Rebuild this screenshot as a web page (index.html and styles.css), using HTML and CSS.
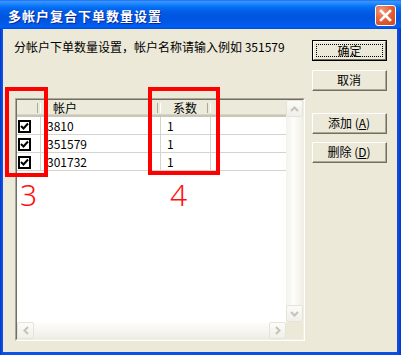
FILE: index.html
```html
<!DOCTYPE html>
<html>
<head>
<meta charset="utf-8">
<link rel="stylesheet" href="styles.css">
</head>
<body>
<div class="win">
  <div class="titlebar">
    <span class="title">多帐户复合下单数量设置</span>
    <div class="close">
      <svg width="19" height="19" viewBox="0 0 19 19"><path d="M5 5 L14 14 M14 5 L5 14" stroke="#fff" stroke-width="2.6" stroke-linecap="square"/></svg>
    </div>
  </div>
  <div class="client">
    <div class="left">
      <div class="label">分帐户下单数量设置，帐户名称请输入例如 351579</div>
      <div class="list">
        <div class="list-in">
          <div class="view">
            <div class="hdr">
              <div class="hc c1"></div>
              <div class="hc c2 hl">帐户</div>
              <div class="hc c3 hm">系数</div>
              <div class="hc c4"></div>
            </div>
            <div class="row">
              <div class="cell c1"><span class="chk"><svg width="9" height="9" viewBox="0 0 9 9"><path d="M1 4 L3.5 6.5 L8 1.5" stroke="#000" stroke-width="2" fill="none"/></svg></span></div>
              <div class="cell c2 txt">3810</div>
              <div class="cell c3 txt">1</div>
              <div class="cell c4"></div>
            </div>
            <div class="row">
              <div class="cell c1"><span class="chk"><svg width="9" height="9" viewBox="0 0 9 9"><path d="M1 4 L3.5 6.5 L8 1.5" stroke="#000" stroke-width="2" fill="none"/></svg></span></div>
              <div class="cell c2 txt">351579</div>
              <div class="cell c3 txt">1</div>
              <div class="cell c4"></div>
            </div>
            <div class="row">
              <div class="cell c1"><span class="chk"><svg width="9" height="9" viewBox="0 0 9 9"><path d="M1 4 L3.5 6.5 L8 1.5" stroke="#000" stroke-width="2" fill="none"/></svg></span></div>
              <div class="cell c2 txt">301732</div>
              <div class="cell c3 txt">1</div>
              <div class="cell c4"></div>
            </div>
          </div>
          <div class="vscroll">
            <div class="arr"><svg width="9" height="6" viewBox="0 0 9 6"><path d="M1 5 L4.5 1.5 L8 5" stroke="#C6C4B8" stroke-width="2" fill="none"/></svg></div>
            <div class="vtrack"></div>
            <div class="arr"><svg width="9" height="6" viewBox="0 0 9 6"><path d="M1 1 L4.5 4.5 L8 1" stroke="#C6C4B8" stroke-width="2" fill="none"/></svg></div>
          </div>
          <div class="hscroll">
            <div class="arr"><svg width="6" height="9" viewBox="0 0 6 9"><path d="M5 1 L1.5 4.5 L5 8" stroke="#C6C4B8" stroke-width="2" fill="none"/></svg></div>
            <div class="htrack"></div>
            <div class="arr"><svg width="6" height="9" viewBox="0 0 6 9"><path d="M1 1 L4.5 4.5 L1 8" stroke="#C6C4B8" stroke-width="2" fill="none"/></svg></div>
          </div>
          <div class="corner"></div>
        </div>
      </div>
    </div>
    <div class="right">
      <div class="btn default"><div class="btn-in"><span class="focus">确定</span></div></div>
      <div class="btn b2"><div class="btn-in">取消</div></div>
      <div class="btn b3"><div class="btn-in">添加 (<u>A</u>)</div></div>
      <div class="btn b4"><div class="btn-in">删除 (<u>D</u>)</div></div>
    </div>
  </div>
  <div class="mark m3"></div>
  <div class="mark m4"></div>
  <span class="num n3">3</span>
  <span class="num n4">4</span>
</div>
</body>
</html>
```
FILE: styles.css
```css
* { box-sizing: border-box; }
body { margin: 0; font-family: "Noto Sans CJK SC", sans-serif; font-size: 12px; color: #000; }
.win {
  position: relative; width: 401px; height: 355px;
  display: flex; flex-direction: column;
  background: linear-gradient(to right, #0733C8 0, #0A52E8 2px, #0A4FE0 398px, #0733C8 401px);
  padding-bottom: 3px;
}
.titlebar {
  height: 29px; flex: none; display: flex; align-items: center;
  padding: 0 5px 0 8px;
  background: linear-gradient(to bottom, #0A5FE8 0, #3D95FF 1px, #2A8CFF 3px, #157EFD 5px, #0570F5 7px, #0262EA 10px, #0059E3 14px, #0055E0 18px, #0057E6 22px, #005CEE 25px, #0060F3 27px, #0049D6 29px);
}
.title {
  flex: 1; color: #fff; font-weight: bold; font-size: 13px; letter-spacing: 1px;
  text-shadow: 1px 1px #0B2A9A; padding-top: 1px;
}
.close {
  width: 21px; height: 21px; margin-top: 2px; border: 1px solid #fff; border-radius: 3px;
  background: radial-gradient(circle at 30% 25%, #F29A7D 0, #E5623A 45%, #CE4419 100%);
  display: flex; align-items: center; justify-content: center;
}
.client {
  flex: 1; margin: 0 4px 0 3px; background: #ECE9D8;
  display: flex; gap: 7px; padding: 11px 0 0 11px;
}
.left { width: 291px; flex: none; }
.label { line-height: 14px; white-space: nowrap; }
.list {
  margin: 44px 0 0 1px; width: 290px; height: 243px;
  border: 1px solid; border-color: #ACA899 #fff #fff #ACA899;
}
.list-in {
  height: 100%; border: 1px solid; border-color: #716F64 #F1EFE2 #F1EFE2 #716F64;
  background: #fff;
  display: grid; grid-template-columns: 1fr 17px; grid-template-rows: 1fr 17px;
}
.view { overflow: hidden; }
.hdr {
  display: flex; height: 17px; background: #EBEADB;
  border-bottom: 2px solid #C9C6B6; box-shadow: inset 0 -1px #D8D5C6;
}
.hc { position: relative; height: 15px; line-height: 15px; flex: none; }
.hc.c1::after, .hc.c2::after, .hc.c3::after {
  content: ""; position: absolute; right: 0; top: 3px; bottom: 2px; width: 2px;
  border-left: 1px solid #ACA899; border-right: 1px solid #fff;
}
.c1 { width: 24px; flex: none; }
.c2 { width: 120px; flex: none; }
.c3 { width: 50px; flex: none; }
.c4 { flex: 1; }
.hl { padding-left: 12px; }
.hm { text-align: center; padding-right: 2px; }
.row { display: flex; height: 18px; border-bottom: 1px solid #D5D3CA; }
.cell { height: 17px; line-height: 17px; }
.cell.c1, .cell.c2, .cell.c3 { border-right: 1px solid #D5D3CA; }
.txt { padding-left: 6px; }
.chk {
  display: flex; align-items: center; justify-content: center;
  width: 13px; height: 13px; margin: 3px 0 0 1px;
  border: 2px solid #000; background: #fff;
}
.vscroll {
  display: flex; flex-direction: column;
  background: linear-gradient(to right, #F3F2EC, #FDFDFA 45%, #EFEEE7);
}
.vtrack { flex: 1; }
.hscroll {
  display: flex;
  background: linear-gradient(to bottom, #FDFDFA, #F6F5F0 55%, #EDECE4);
}
.htrack { flex: 1; }
.arr {
  width: 17px; height: 17px; flex: none;
  border: 1px solid #E6E4DA; border-radius: 2px;
  background: linear-gradient(to bottom, #FBFBF8, #F0EFE9);
  display: flex; align-items: center; justify-content: center;
}
.corner { background: #ECE9D8; }
.right { width: 75px; flex: none; display: flex; flex-direction: column; }
.btn {
  height: 21px; width: 75px; flex: none;
  border: 1px solid; border-color: #fff #716F64 #716F64 #fff;
  background: #ECE9D8;
}
.btn-in {
  height: 100%; border-right: 1px solid #ACA899; border-bottom: 1px solid #ACA899;
  display: flex; align-items: center; justify-content: center; line-height: 14px;
  white-space: pre;
}
.btn.default { border: 1px solid #000; }
.btn.default .btn-in {
  border: 1px solid; border-color: #fff #716F64 #716F64 #fff;
  padding: 2px;
}
.focus {
  flex: 1; align-self: stretch; border: 1px dotted #000;
  display: flex; align-items: center; justify-content: center;
}
.b2 { margin-top: 9px; }
.b3 { margin-top: 22px; }
.b4 { margin-top: 8px; }
u { text-decoration: underline; text-underline-offset: 1px; }
.mark { position: absolute; border: 4px solid #FF0000; }
.m3 { left: 5px; top: 87px; width: 43px; height: 90px; }
.m4 { left: 148px; top: 87px; width: 72px; height: 88px; }
.num {
  position: absolute; color: #FF1010; font-family: "Noto Sans", sans-serif;
  font-weight: 300; font-size: 30px; line-height: 30px;
}
.n3 { left: 20px; top: 180px; }
.n4 { left: 170px; top: 180px; }
```
